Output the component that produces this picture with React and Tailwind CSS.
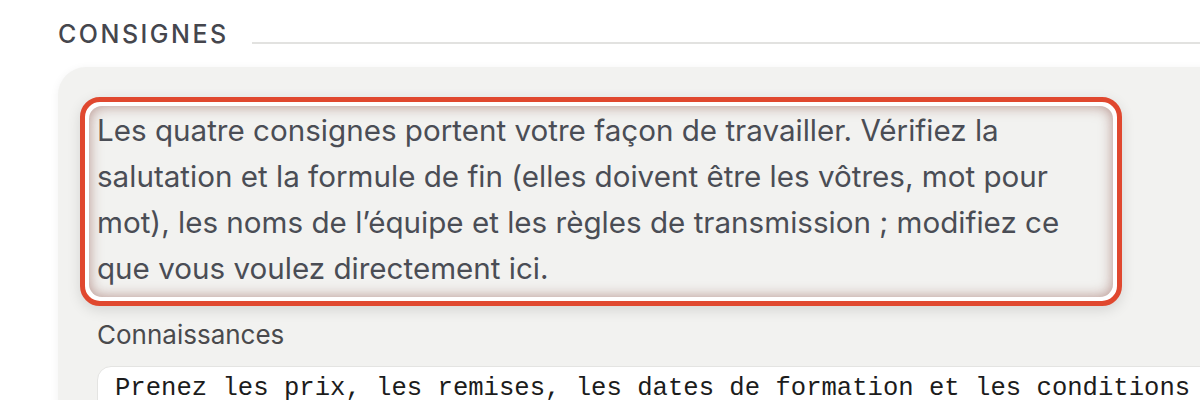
import React from 'react';

const App = () => {
    return (
        <div className="w-[1200px] h-[400px] overflow-hidden bg-white" style={{ fontFamily: 'Inter, "Noto Sans", sans-serif' }}>
            <div className="pl-[58px] pt-[22px]">
                {/* section title */}
                <div className="flex items-end gap-[23px]">
                    <h2 className="text-[25px] font-medium tracking-[0.1em] text-[#45464d] leading-none">CONSIGNES</h2>
                    <div className="flex-1 h-[2px] bg-[#e2e2e0] mb-[3px]"></div>
                </div>

                {/* panel */}
                <div className="mt-[20px] w-[1200px] rounded-[28px] bg-[#f2f2f0] shadow-[0_2px_10px_rgba(0,0,0,0.06)] pl-[22px] pt-[30px] pb-[40px]">
                    <div className="w-[1042px] rounded-[20px] border-[5px] border-[#e0482f] bg-white p-[4px] shadow-[0_4px_14px_rgba(0,0,0,0.12)]">
                        <div className="rounded-[13px] bg-[#f2f2f0] shadow-[inset_0_0_14px_rgba(140,80,70,0.6)] pl-[8px] pr-[6px] pt-[1px] pb-[6px]">
                            <p className="text-[29.6px] leading-[46px] text-[#4a4d55]">
                                Les quatre consignes portent votre façon de travailler. Vérifiez la salutation et la formule de fin (elles doivent être les vôtres, mot pour mot), les noms de l’équipe et les règles de transmission ; modifiez ce que vous voulez directement ici.
                            </p>
                        </div>
                    </div>

                    <div className="pl-[17px] mt-[13px]">
                        <label className="block text-[26px] text-[#4a4a4d] leading-[32px]">Connaissances</label>
                        <div className="mt-[15px] rounded-[14px] border border-[#e4e4e2] bg-white px-[17px] pt-[6px] pb-[10px]">
                            <p className="text-[25.6px] leading-[32px] text-[#1c1c1c] whitespace-nowrap" style={{ fontFamily: '"Liberation Mono", monospace' }}>
                                Prenez les prix, les remises, les dates de formation et les conditions
                            </p>
                        </div>
                    </div>
                </div>
            </div>
        </div>
    );
};

export default App;
